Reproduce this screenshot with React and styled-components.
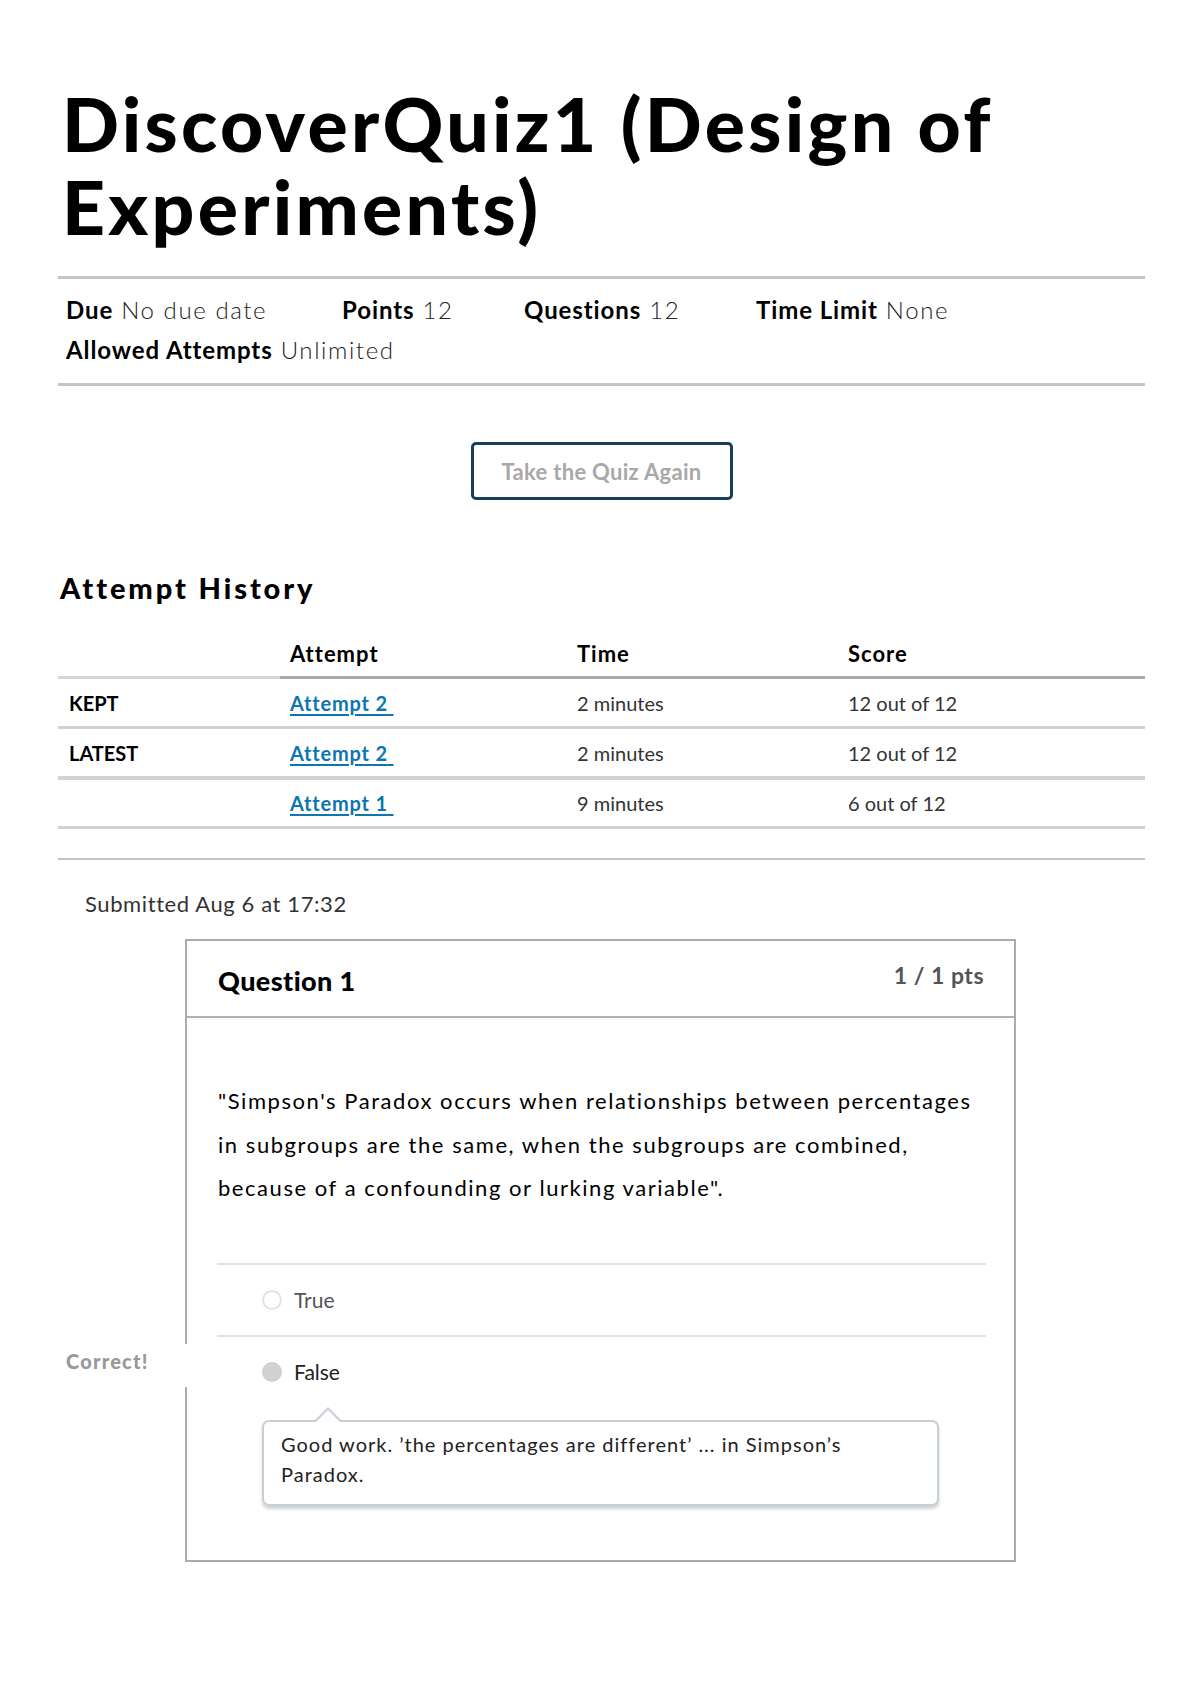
import React from 'react';
import styled, {createGlobalStyle} from 'styled-components';

const GlobalStyle = createGlobalStyle`
    body {
        margin: 0;
        background: #fff;
        font-family: "Lato", "Liberation Sans", sans-serif;
        color: #2d3b45;
    }
`

const Page = styled.div`
    width: 1087px;
    padding: 0 55px 0 58px;
    padding-bottom: 139px;
`

const Title = styled.h1`
    margin: 82px 0 0 4px;
    font-size: 75px;
    line-height: 83px;
    font-weight: 900;
    letter-spacing: 3.3px;
    color: #000;
`

const Details = styled.div`
    margin-top: 28px;
    border-top: 3px solid #c4c4c4;
    border-bottom: 3px solid #c4c4c4;
    padding: 10px 0 14px 8px;
`

const DetailRow = styled.div`
    display: flex;
    height: 40px;
    align-items: center;
`

const Detail = styled.div`
    width: ${p => p.w}px;
    font-size: 24px;
    color: #222;
    white-space: nowrap;
    letter-spacing: 1.6px;
    b {
        font-weight: 700;
        color: #000;
        margin-right: 8px;
        letter-spacing: 0.9px;
    }
    span {
        font-weight: 300;
    }
`

const ButtonWrap = styled.div`
    display: flex;
    justify-content: center;
    margin-top: 56px;
`

const Button = styled.button`
    width: 262px;
    height: 58px;
    border: 3px solid #163f5e;
    border-radius: 5px;
    background: #fff;
    color: #a8a8a8;
    font-family: "Lato", "Liberation Sans", sans-serif;
    font-size: 22px;
    font-weight: 700;
    letter-spacing: 0.3px;
`

const SectionTitle = styled.h2`
    margin: 71px 0 0 2px;
    font-size: 29px;
    line-height: 34px;
    font-weight: 900;
    letter-spacing: 2.9px;
    color: #000;
`

const Table = styled.div`
    margin-top: 25px;
    display: grid;
    grid-template-columns: 222px 287px 271px 1fr;
`

const HeadCell = styled.div`
    height: 46px;
    display: flex;
    align-items: center;
    padding-left: 10px;
    font-size: 22px;
    font-weight: 700;
    letter-spacing: 1px;
    color: #000;
    border-bottom: 3px solid ${p => p.light ? '#d3d7da' : '#a3a9ae'};
`

const Cell = styled.div`
    height: 47px;
    display: flex;
    align-items: center;
    padding-left: ${p => p.first ? 11 : 10}px;
    font-size: 20px;
    font-weight: ${p => p.first ? 700 : 400};
    color: ${p => p.first ? '#000' : '#333'};
    border-bottom: ${p => p.thick ? 4 : 3}px solid #cfd3d6;
    margin-bottom: ${p => p.thick ? -1 : 0}px;
`

const AttemptLink = styled.a`
    color: #0c76ad;
    font-weight: 700;
    letter-spacing: 0.8px;
    text-decoration: underline;
    text-underline-offset: 3px;
    text-decoration-thickness: 2px;
`

const Divider = styled.div`
    margin-top: 29px;
    height: 2px;
    background: #c2c2c2;
`

const Submitted = styled.div`
    margin: 31px 0 0 27px;
    font-size: 22px;
    line-height: 26px;
    letter-spacing: 0.6px;
    color: #333;
`

const QuestionCard = styled.div`
    position: relative;
    margin: 22px 0 0 127px;
    width: 827px;
    border: 2px solid #ababab;
`

const QuestionHeader = styled.div`
    height: 75px;
    display: flex;
    justify-content: space-between;
    align-items: center;
    padding: 0 30px 0 31px;
    border-bottom: 2px solid #b0b0b0;
`

const QuestionName = styled.div`
    font-size: 27px;
    font-weight: 900;
    letter-spacing: 0.4px;
    color: #000;
    margin-top: 4px;
`

const Points = styled.div`
    font-size: 23px;
    font-weight: 700;
    color: #555;
    letter-spacing: 0.5px;
    margin-bottom: 8px;
`

const QuestionBody = styled.div`
    padding: 61px 28px 54px 30px;
`

const QuestionText = styled.p`
    margin: 0 0 0 1px;
    font-size: 22px;
    line-height: 43.5px;
    color: #000;
    letter-spacing: 1.55px;
`

const Answers = styled.div`
    margin-top: 53px;
    border-top: 2px solid #e2e2e2;
`

const Answer = styled.div`
    display: flex;
    align-items: center;
    height: 70px;
    padding-left: 45px;
    border-bottom: ${p => p.last ? 'none' : '2px solid #e2e2e2'};
    font-size: 21px;
    color: ${p => p.selected ? '#222' : '#555'};
`

const Radio = styled.span`
    width: 16px;
    height: 16px;
    border-radius: 50%;
    border: 2px solid ${p => p.checked ? '#cfcfcf' : '#e3e3e3'};
    background: ${p => p.checked ? '#d2d2d2' : '#fff'};
    margin-right: 12px;
`

const Bubble = styled.div`
    position: relative;
    margin: 13px 0 0 45px;
    width: 677px;
    padding: 7px 40px 15px 17px;
    border: 2px solid #c7cfd6;
    border-radius: 7px;
    box-shadow: 0 3px 3px rgba(120, 130, 140, 0.35);
    font-size: 20px;
    line-height: 30px;
    letter-spacing: 1px;
    color: #222;
    box-sizing: border-box;
    &::before {
        content: '';
        position: absolute;
        left: 50px;
        top: -15px;
        border: 14px solid transparent;
        border-top: 0;
        border-bottom: 14px solid #c7cfd6;
    }
    &::after {
        content: '';
        position: absolute;
        left: 52px;
        top: -12px;
        border: 12px solid transparent;
        border-top: 0;
        border-bottom: 12px solid #fff;
    }
`

const CorrectTag = styled.div`
    position: absolute;
    left: -122px;
    top: 403px;
    width: 124px;
    height: 43px;
    background: #fff;
    display: flex;
    align-items: center;
    padding: 0 0 9px 1px;
    box-sizing: border-box;
    font-size: 20px;
    font-weight: 900;
    color: #999;
    letter-spacing: 1.2px;
`

const details = [
    [{label: 'Due', value: 'No due date', w: 276}, {label: 'Points', value: '12', w: 182}, {label: 'Questions', value: '12', w: 232}, {label: 'Time Limit', value: 'None', w: 200}],
    [{label: 'Allowed Attempts', value: 'Unlimited', w: 400}],
]

const attempts = [
    {tag: 'KEPT', name: 'Attempt 2', time: '2 minutes', score: '12 out of 12'},
    {tag: 'LATEST', name: 'Attempt 2', time: '2 minutes', score: '12 out of 12', thick: true},
    {tag: '', name: 'Attempt 1', time: '9 minutes', score: '6 out of 12'},
]

const App = () => {
    return (
        <Page>
            <GlobalStyle/>
            <Title>DiscoverQuiz1 (Design of Experiments)</Title>
            <Details>
                {details.map((row, i) => (
                    <DetailRow key={i}>
                        {row.map(d => (
                            <Detail key={d.label} w={d.w}><b>{d.label}</b><span>{d.value}</span></Detail>
                        ))}
                    </DetailRow>
                ))}
            </Details>
            <ButtonWrap>
                <Button>Take the Quiz Again</Button>
            </ButtonWrap>
            <SectionTitle>Attempt History</SectionTitle>
            <Table>
                <HeadCell light></HeadCell>
                <HeadCell>Attempt</HeadCell>
                <HeadCell>Time</HeadCell>
                <HeadCell>Score</HeadCell>
                {attempts.map((a, i) => (
                    <React.Fragment key={i}>
                        <Cell first thick={a.thick}>{a.tag}</Cell>
                        <Cell thick={a.thick}><AttemptLink href="#">{a.name}{'\u00a0'}</AttemptLink></Cell>
                        <Cell thick={a.thick}>{a.time}</Cell>
                        <Cell thick={a.thick}>{a.score}</Cell>
                    </React.Fragment>
                ))}
            </Table>
            <Divider/>
            <Submitted>Submitted Aug 6 at 17:32</Submitted>
            <QuestionCard>
                <QuestionHeader>
                    <QuestionName>Question 1</QuestionName>
                    <Points>1 / 1 pts</Points>
                </QuestionHeader>
                <QuestionBody>
                    <QuestionText>
                        "Simpson's Paradox occurs when relationships between percentages in subgroups are the same, when the subgroups are combined, because of a confounding or lurking variable".
                    </QuestionText>
                    <Answers>
                        <Answer><Radio/>True</Answer>
                        <Answer last selected><Radio checked/>False</Answer>
                    </Answers>
                    <Bubble>Good work. ’the percentages are different’ ... in Simpson’s Paradox.</Bubble>
                </QuestionBody>
                <CorrectTag>Correct!</CorrectTag>
            </QuestionCard>
        </Page>
    )
}

export default App;
